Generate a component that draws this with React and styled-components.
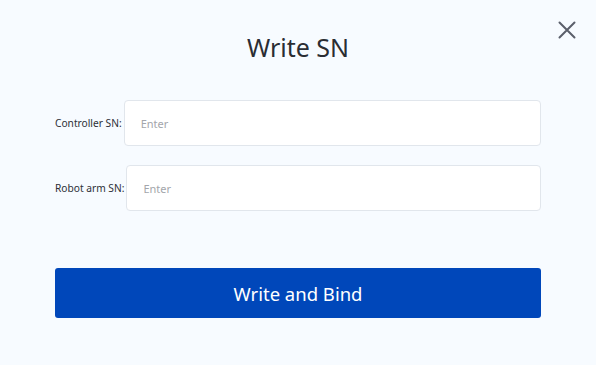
import React from "react";
import styled, { createGlobalStyle } from "styled-components";

const Global = createGlobalStyle`
  html, body { margin: 0; padding: 0; background: #f7fbff; }
  * { box-sizing: border-box; }
`;

const Page = styled.div`
  position: relative;
  width: 596px;
  height: 365px;
  padding: 0 55px;
  background: #f7fbff;
  font-family: "Noto Sans", "Open Sans", sans-serif;
  color: #2c2f36;
`;

const Title = styled.h1`
  margin: 0;
  padding-top: 30px;
  height: 100px;
  font-size: 25px;
  line-height: 34px;
  font-weight: 400;
  text-align: center;
  color: #2a2d33;
`;

const Close = styled.button`
  position: absolute;
  top: 21px;
  right: 20px;
  width: 18px;
  height: 18px;
  padding: 0;
  border: 0;
  background: none;
  display: flex;
  align-items: center;
  justify-content: center;
  cursor: pointer;
`;

const Form = styled.div`
  display: flex;
  flex-direction: column;
  gap: 19px;
`;

const Row = styled.label`
  display: flex;
  align-items: center;
  gap: ${(p) => p.$gap}px;
  height: 46px;
`;

const Label = styled.span`
  font-size: 10.2px;
  color: #2c2f36;
  white-space: nowrap;
`;

const Input = styled.input`
  flex: 1;
  height: 46px;
  border: 1px solid #e1e6ec;
  border-radius: 4px;
  background: #fff;
  padding: 0 0 0 ${(p) => p.$pad}px;
  font-family: inherit;
  font-size: 11px;
  color: #333;
  outline: none;
  &::placeholder { color: #a3a6ab; }
`;

const Submit = styled.button`
  margin-top: 57px;
  width: 100%;
  height: 50px;
  border: 0;
  border-radius: 3px;
  background: #0047ba;
  color: #fff;
  font-family: inherit;
  font-size: 18.5px;
  font-weight: 400;
  cursor: pointer;
`;

export default function App() {
  return (
    <Page>
      <Global />
      <Close aria-label="close">
        <svg width="18" height="18" viewBox="0 0 18 18">
          <path d="M1.5 1.5 L16.5 16.5 M16.5 1.5 L1.5 16.5" stroke="#5b5f6b" strokeWidth="2" strokeLinecap="round" />
        </svg>
      </Close>
      <Title>Write SN</Title>
      <Form>
        <Row $gap={2}>
          <Label>Controller SN:</Label>
          <Input $pad={16} placeholder="Enter" />
        </Row>
        <Row $gap={2}>
          <Label>Robot arm SN:</Label>
          <Input $pad={16} placeholder="Enter" />
        </Row>
      </Form>
      <Submit>Write and Bind</Submit>
    </Page>
  );
}
